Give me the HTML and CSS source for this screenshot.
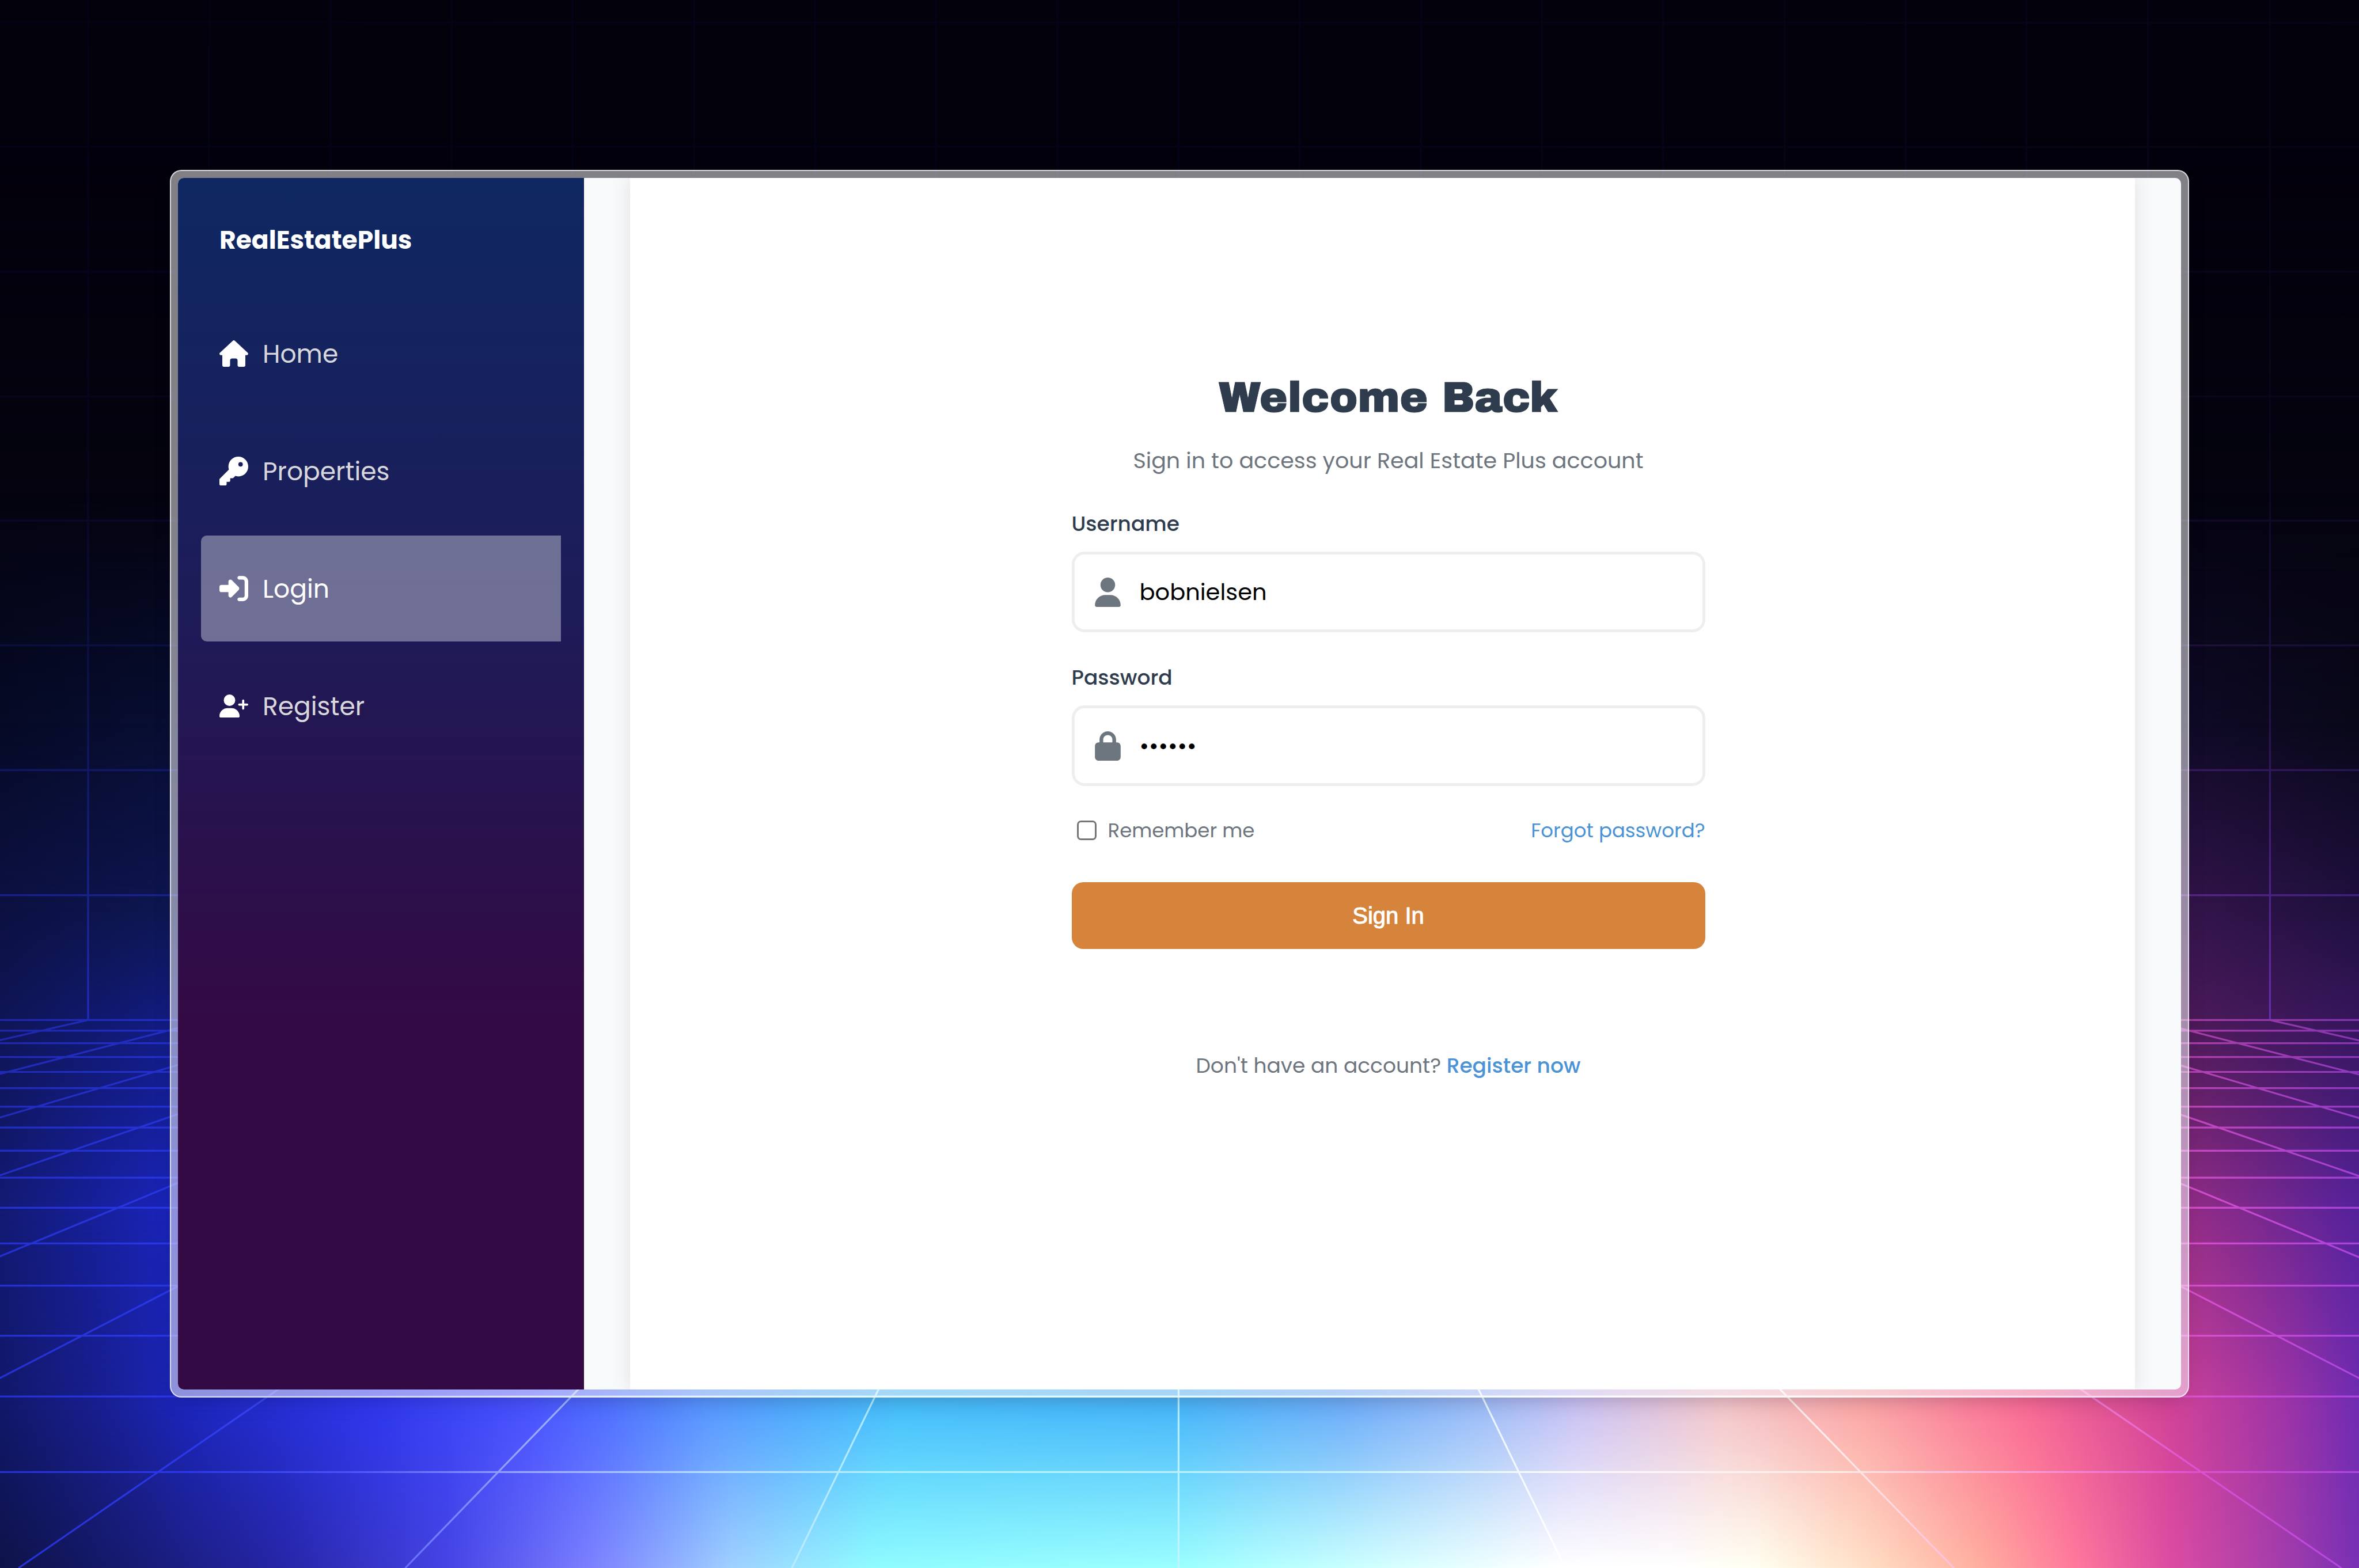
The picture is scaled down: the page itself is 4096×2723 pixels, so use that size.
FILE: index.html
```html
<!DOCTYPE html>
<html lang="en">
<head>
<meta charset="utf-8">
<title>RealEstatePlus – Login</title>
<meta name="viewport" content="width=device-width, initial-scale=1">
<link rel="stylesheet" href="styles.css">
</head>
<body class="desktop">
<svg class="wallpaper" viewBox="0 0 5088 3382" preserveAspectRatio="none" aria-hidden="true">
  <defs>
    <linearGradient id="r1"><stop offset="0" stop-color="#04030f"/><stop offset="1" stop-color="#04030f"/></linearGradient>
    <linearGradient id="r2"><stop offset="0" stop-color="#060a26"/><stop offset=".07" stop-color="#080e32"/><stop offset=".93" stop-color="#0f0a26"/><stop offset="1" stop-color="#090819"/></linearGradient>
    <linearGradient id="r3"><stop offset="0" stop-color="#0c1142"/><stop offset=".07" stop-color="#0e1650"/><stop offset=".93" stop-color="#32144a"/><stop offset="1" stop-color="#1e103e"/></linearGradient>
    <linearGradient id="r4"><stop offset="0" stop-color="#0f1554"/><stop offset=".07" stop-color="#121c80"/><stop offset=".93" stop-color="#4a1a58"/><stop offset="1" stop-color="#35165c"/></linearGradient>
    <linearGradient id="r5"><stop offset="0" stop-color="#121a72"/><stop offset=".07" stop-color="#1a24b8"/><stop offset=".93" stop-color="#902c86"/><stop offset="1" stop-color="#54229a"/></linearGradient>
    <linearGradient id="r6"><stop offset="0" stop-color="#111868"/><stop offset=".04" stop-color="#181e8c"/><stop offset=".08" stop-color="#1c26bc"/><stop offset=".16" stop-color="#3038ee"/><stop offset=".225" stop-color="#4a54ff"/><stop offset=".3" stop-color="#5898ff"/><stop offset=".38" stop-color="#48c0fc"/><stop offset=".5" stop-color="#4ab8fa"/><stop offset=".57" stop-color="#70b0fa"/><stop offset=".63" stop-color="#a0bef8"/><stop offset=".67" stop-color="#ccc4f4"/><stop offset=".73" stop-color="#f4c8cc"/><stop offset=".79" stop-color="#fca8a8"/><stop offset=".86" stop-color="#fa6c96"/><stop offset=".92" stop-color="#d24498"/><stop offset=".97" stop-color="#9c34a8"/><stop offset="1" stop-color="#702cb2"/></linearGradient>
    <linearGradient id="r7"><stop offset="0" stop-color="#0e1348"/><stop offset=".05" stop-color="#161a6c"/><stop offset=".12" stop-color="#2626a6"/><stop offset=".19" stop-color="#4644e4"/><stop offset=".25" stop-color="#7c80ff"/><stop offset=".31" stop-color="#a0d0ff"/><stop offset=".37" stop-color="#90fcff"/><stop offset=".5" stop-color="#9cffff"/><stop offset=".6" stop-color="#dcffff"/><stop offset=".66" stop-color="#fff"/><stop offset=".71" stop-color="#fff"/><stop offset=".745" stop-color="#fffff0"/><stop offset=".79" stop-color="#ffe0c6"/><stop offset=".84" stop-color="#ffae9e"/><stop offset=".88" stop-color="#ff789c"/><stop offset=".92" stop-color="#dc4ca2"/><stop offset=".97" stop-color="#a03cac"/><stop offset="1" stop-color="#7830b4"/></linearGradient>
    <linearGradient id="fade" x1="0" y1="0" x2="0" y2="1"><stop offset="0" stop-color="#fff" stop-opacity="0"/><stop offset="1" stop-color="#fff"/></linearGradient>
    <mask id="m1" maskUnits="userSpaceOnUse" x="0" y="0" width="5088" height="3382"><rect y="300" width="5088" height="760" fill="url(#fade)"/><rect y="1059" width="5088" height="2323" fill="#fff"/></mask>
    <mask id="m2" maskUnits="userSpaceOnUse" x="0" y="0" width="5088" height="3382"><rect y="1060" width="5088" height="500" fill="url(#fade)"/><rect y="1559" width="5088" height="1823" fill="#fff"/></mask>
    <mask id="m3" maskUnits="userSpaceOnUse" x="0" y="0" width="5088" height="3382"><rect y="1560" width="5088" height="400" fill="url(#fade)"/><rect y="1959" width="5088" height="1423" fill="#fff"/></mask>
    <mask id="m4" maskUnits="userSpaceOnUse" x="0" y="0" width="5088" height="3382"><rect y="1960" width="5088" height="240" fill="url(#fade)"/><rect y="2199" width="5088" height="1183" fill="#fff"/></mask>
    <mask id="m5" maskUnits="userSpaceOnUse" x="0" y="0" width="5088" height="3382"><rect y="2200" width="5088" height="400" fill="url(#fade)"/><rect y="2599" width="5088" height="783" fill="#fff"/></mask>
    <mask id="m6" maskUnits="userSpaceOnUse" x="0" y="0" width="5088" height="3382"><rect y="2600" width="5088" height="440" fill="url(#fade)"/><rect y="3039" width="5088" height="343" fill="#fff"/></mask>
    <mask id="m7" maskUnits="userSpaceOnUse" x="0" y="0" width="5088" height="3382"><rect y="3040" width="5088" height="342" fill="url(#fade)"/></mask>
    <linearGradient id="floorline" gradientUnits="userSpaceOnUse" x1="0" y1="0" x2="5088" y2="0"><stop offset="0" stop-color="#2834e0"/><stop offset=".08" stop-color="#2c3cf0"/><stop offset=".15" stop-color="#5058ff"/><stop offset=".22" stop-color="#a0b0ff"/><stop offset=".3" stop-color="#c4e4ff"/><stop offset=".4" stop-color="#b4f6ff"/><stop offset=".55" stop-color="#c8f4ff"/><stop offset=".66" stop-color="#fff"/><stop offset=".78" stop-color="#fff0ee"/><stop offset=".86" stop-color="#ffa0dc"/><stop offset=".93" stop-color="#e054d8"/><stop offset="1" stop-color="#b448e4"/></linearGradient>
    <linearGradient id="wallline" gradientUnits="userSpaceOnUse" x1="0" y1="0" x2="5088" y2="0"><stop offset="0" stop-color="#2834e0"/><stop offset=".5" stop-color="#2a38e4"/><stop offset=".93" stop-color="#8a3cd0"/><stop offset="1" stop-color="#6434d0"/></linearGradient>
    <linearGradient id="rise" x1="0" y1="0" x2="0" y2="1"><stop offset="0" stop-color="#fff" stop-opacity=".05"/><stop offset=".45" stop-color="#fff" stop-opacity=".08"/><stop offset=".7" stop-color="#fff" stop-opacity=".22"/><stop offset=".9" stop-color="#fff" stop-opacity=".5"/><stop offset="1" stop-color="#fff" stop-opacity=".7"/></linearGradient>
    <linearGradient id="near" x1="0" y1="0" x2="0" y2="1"><stop offset="0" stop-color="#fff" stop-opacity=".6"/><stop offset=".35" stop-color="#fff" stop-opacity=".85"/><stop offset="1" stop-color="#fff" stop-opacity=".9"/></linearGradient>
    <mask id="wallmask" maskUnits="userSpaceOnUse" x="0" y="0" width="5088" height="3382"><rect width="5088" height="2198" fill="url(#rise)"/></mask>
    <mask id="floormask" maskUnits="userSpaceOnUse" x="0" y="0" width="5088" height="3382"><rect y="2196" width="5088" height="1186" fill="url(#near)"/></mask>
  </defs>
  <rect width="5088" height="3382" fill="#03010c"/>
  <rect width="5088" height="3382" fill="url(#r1)" mask="url(#m1)"/>
  <rect width="5088" height="3382" fill="url(#r2)" mask="url(#m2)"/>
  <rect width="5088" height="3382" fill="url(#r3)" mask="url(#m3)"/>
  <rect width="5088" height="3382" fill="url(#r4)" mask="url(#m4)"/>
  <rect width="5088" height="3382" fill="url(#r5)" mask="url(#m5)"/>
  <rect width="5088" height="3382" fill="url(#r6)" mask="url(#m6)"/>
  <rect width="5088" height="3382" fill="url(#r7)" mask="url(#m7)"/>
  <g mask="url(#wallmask)"><path fill="none" stroke="url(#wallline)" stroke-width="4" d="M0 49H5088M0 317H5088M0 586H5088M0 855H5088M0 1123H5088M0 1392H5088M0 1661H5088M0 1931H5088M190 0V2200M451 0V2200M713 0V2200M974 0V2200M1235 0V2200M1497 0V2200M1758 0V2200M2019 0V2200M2281 0V2200M2542 0V2200M2803 0V2200M3065 0V2200M3326 0V2200M3587 0V2200M3849 0V2200M4110 0V2200M4371 0V2200M4633 0V2200M4896 0V2200"/></g>
  <g mask="url(#floormask)"><path fill="none" stroke="url(#floorline)" stroke-width="4" d="M0 2200H5088M0 2223H5088M0 2250H5088M0 2280H5088M0 2312H5088M0 2347H5088M0 2387H5088M0 2432H5088M0 2482H5088M0 2540H5088M0 2605H5088M0 2682H5088M0 2773H5088M0 2881H5088M0 3012H5088M0 3175H5088M190 2200L-4964 3382M451 2200L-4130 3382M713 2200L-3296 3382M974 2200L-2462 3382M1235 2200L-1628 3382M1497 2200L-794 3382M1758 2200L40 3382M2019 2200L874 3382M2281 2200L1708 3382M2542 2200V3382M2803 2200L3376 3382M3065 2200L4214 3382M3326 2200L5050 3382M3587 2200L5884 3382M3849 2200L6712 3382M4110 2200L7546 3382M4371 2200L8380 3382M4633 2200L9214 3382M4896 2200L10048 3382"/></g>
</svg>

<div class="window">
  <div class="app">
    <aside class="sidebar">
      <a class="brand" href="#">RealEstatePlus</a>
      <nav class="nav">
        <a class="nav-link" href="#">
          <svg class="nav-icon" viewBox="0 0 50 46" aria-hidden="true"><path d="M23 .9a3 3 0 0 1 4 0L49 21.400a2.500 2.500 0 0 1-1.800 4.400H45V43a3 3 0 0 1-3 3H34.500a3 3 0 0 1-3-3V35a3.500 3.500 0 0 0-3.500-3.500H22a3.500 3.500 0 0 0-3.500 3.500V43a3 3 0 0 1-3 3H8a3 3 0 0 1-3-3V25.800H2.800A2.500 2.500 0 0 1 1 21.400z"/></svg>
          Home
        </a>
        <a class="nav-link" href="#">
          <svg class="nav-icon" viewBox="0 0 512 512" aria-hidden="true"><path d="M336 352c97.200 0 176-78.800 176-176S433.200 0 336 0S160 78.800 160 176c0 18.700 2.900 36.800 8.300 53.700L7 391c-4.500 4.500-7 10.600-7 17l0 80c0 13.300 10.700 24 24 24l80 0c13.300 0 24-10.700 24-24l0-40 40 0c13.300 0 24-10.700 24-24l0-40 40 0c6.400 0 12.500-2.500 17-7l33.300-33.300c16.900 5.400 35 8.300 53.700 8.300zM376 96a40 40 0 1 1 0 80 40 40 0 1 1 0-80z"/></svg>
          Properties
        </a>
        <a class="nav-link nav-link-active" href="#" aria-current="page">
          <svg class="nav-icon" viewBox="0 0 512 512" aria-hidden="true"><path d="M217.900 105.900L340.700 228.700c7.200 7.200 11.300 17.100 11.300 27.300s-4.100 20.100-11.300 27.300L217.900 406.100c-6.400 6.400-15 9.900-24 9.900c-18.700 0-33.900-15.200-33.900-33.900l0-62.100L32 320c-17.700 0-32-14.300-32-32l0-64c0-17.700 14.300-32 32-32l128 0 0-62.100c0-18.700 15.200-33.900 33.900-33.900c9 0 17.600 3.600 24 9.900zM352 416l64 0c17.700 0 32-14.300 32-32l0-256c0-17.700-14.300-32-32-32l-64 0c-17.700 0-32-14.300-32-32s14.300-32 32-32l64 0c53 0 96 43 96 96l0 256c0 53-43 96-96 96l-64 0c-17.700 0-32-14.300-32-32s14.300-32 32-32z"/></svg>
          Login
        </a>
        <a class="nav-link" href="#">
          <svg class="nav-icon" viewBox="0 0 640 512" aria-hidden="true"><path d="M96 128a128 128 0 1 1 256 0A128 128 0 1 1 96 128zM0 482.300C0 383.800 79.800 304 178.300 304l91.400 0C368.200 304 448 383.800 448 482.300c0 16.400-13.300 29.700-29.700 29.700L29.700 512C13.300 512 0 498.700 0 482.300zM504 312l0-64-64 0c-13.300 0-24-10.700-24-24s10.700-24 24-24l64 0 0-64c0-13.300 10.700-24 24-24s24 10.700 24 24l0 64 64 0c13.300 0 24 10.700 24 24s-10.700 24-24 24l-64 0 0 64c0 13.300-10.700 24-24 24s-24-10.700-24-24z"/></svg>
          Register
        </a>
      </nav>
    </aside>
    <main class="content">
      <div class="sheet">
        <form class="login">
          <h1 class="title">Welcome Back</h1>
          <p class="subtitle">Sign in to access your Real Estate Plus account</p>
          <label class="label" for="username">Username</label>
          <div class="field">
            <svg class="field-icon" viewBox="0 0 448 512" aria-hidden="true"><path d="M224 256A128 128 0 1 0 224 0a128 128 0 1 0 0 256zm-45.700 48C79.800 304 0 383.800 0 482.300C0 498.700 13.300 512 29.700 512l388.600 0c16.400 0 29.700-13.300 29.700-29.700C448 383.800 368.200 304 269.700 304l-91.400 0z"/></svg>
            <input class="input" id="username" type="text" value="bobnielsen">
          </div>
          <label class="label" for="password">Password</label>
          <div class="field">
            <svg class="field-icon" viewBox="0 0 448 512" aria-hidden="true"><path d="M144 144l0 48 160 0 0-48c0-44.200-35.800-80-80-80s-80 35.800-80 80zM80 192l0-48C80 64.500 144.500 0 224 0s144 64.500 144 144l0 48 16 0c35.300 0 64 28.700 64 64l0 192c0 35.300-28.700 64-64 64L64 512c-35.300 0-64-28.700-64-64L0 256c0-35.300 28.700-64 64-64l16 0z"/></svg>
            <input class="input" id="password" type="password" value="secret">
          </div>
          <div class="options">
            <label class="remember"><input class="checkbox" type="checkbox"> Remember me</label>
            <a class="link" href="#">Forgot password?</a>
          </div>
          <button class="submit" type="submit">Sign In</button>
          <p class="signup">Don't have an account? <a class="link link-strong" href="#">Register now</a></p>
        </form>
      </div>
    </main>
  </div>
</div>
</body>
</html>
```
FILE: styles.css
```css
* { box-sizing: border-box; }

html { height: 100%; }

.desktop {
  margin: 0;
  min-height: 100%;
  padding: 295px 295px 296px;
  display: flex;
  background: #03010c;
  font-family: Poppins, Inter, "Noto Sans", sans-serif;
}

.wallpaper {
  position: absolute;
  inset: 0;
  width: 100%;
  height: 100%;
}

.window {
  position: relative;
  flex: 1;
  display: flex;
  padding: 12px;
  border: 2px solid rgba(255, 255, 255, .7);
  border-radius: 20px;
  background: rgba(255, 255, 255, .5);
  background-clip: border-box;
  box-shadow: 0 14px 40px -12px rgba(0, 0, 0, .2);
}

.app {
  flex: 1;
  display: flex;
  border-radius: 10px;
  overflow: hidden;
  background: #f8f9fb;
}

/* Sidebar */
.sidebar {
  flex: 0 0 705px;
  padding: 78px 40px 0;
  background: linear-gradient(180deg, #0f2862 0%, #1d1b58 36%, #340a44 70%, #340a44 100%);
}

.brand {
  display: block;
  padding-left: 32px;
  line-height: 60px;
  font-size: 44px;
  font-weight: 700;
  color: #fff;
  text-decoration: none;
}

.nav {
  display: flex;
  flex-direction: column;
  gap: 20px;
  margin-top: 75px;
}

.nav-link {
  display: flex;
  align-items: center;
  gap: 25px;
  height: 184px;
  padding-left: 32px;
  border-radius: 10px 0 0 10px;
  font-size: 44px;
  color: #d8d8dc;
  text-decoration: none;
}

.nav-link-active {
  background: rgba(255, 255, 255, .37);
  color: #fff;
}

.nav-icon {
  width: 50px;
  height: 50px;
  fill: #fff;
}

/* Main area */
.content {
  flex: 1;
  display: flex;
  padding: 0 80px;
}

.sheet {
  flex: 1;
  padding: 332px 0 0 20px;
  background: #fff;
  box-shadow: 0 0 28px rgba(0, 0, 0, .1);
}

.login {
  display: flex;
  flex-direction: column;
  max-width: 1100px;
  margin: 0 auto;
}

.title {
  margin: 0;
  line-height: 100px;
  font-family: "Arial Black", "Archivo Black", Inter, sans-serif;
  font-size: 73px;
  font-weight: 400;
  text-align: center;
  color: #2f3c4e;
  -webkit-text-stroke: 1px currentColor;
}

.subtitle {
  margin: 29px 0 30px;
  line-height: 60px;
  font-size: 38px;
  text-align: center;
  color: #6d757e;
}

.label {
  line-height: 60px;
  margin: 20px 0 18px;
  font-size: 36px;
  font-weight: 500;
  color: #2f3c4e;
}

.field {
  display: flex;
  align-items: center;
  gap: 33px;
  height: 140px;
  margin-bottom: 29px;
  padding: 0 35px;
  border: 5px solid #eee;
  border-radius: 22px;
}

.field-icon {
  width: 45px;
  height: 51px;
  fill: #6d757e;
}

.input {
  flex: 1;
  min-width: 0;
  padding: 0;
  border: 0;
  outline: 0;
  background: none;
  font: inherit;
  font-size: 40px;
  color: #000;
}

.options {
  display: flex;
  align-items: center;
  justify-content: space-between;
  margin: 18px 0 60px;
  line-height: 60px;
  font-size: 34px;
  color: #6d757e;
}

.remember {
  display: flex;
  align-items: center;
  gap: 20px;
  padding-left: 9px;
}

.checkbox {
  appearance: none;
  width: 34px;
  height: 34px;
  margin: 0;
  border: 3px solid #767676;
  border-radius: 7px;
  background: #fff;
}

.link {
  color: #4a93d6;
  text-decoration: none;
}

.link-strong { font-weight: 500; }

.submit {
  height: 116px;
  border: 0;
  border-radius: 20px;
  background: #d6833c;
  font-family: Arial, "Liberation Sans", sans-serif;
  font-size: 40px;
  font-weight: 500;
  color: #fff;
  -webkit-text-stroke: 1px currentColor;
}

.signup {
  margin: 173px 0 0;
  line-height: 60px;
  font-size: 36px;
  text-align: center;
  color: #6d757e;
}
```
